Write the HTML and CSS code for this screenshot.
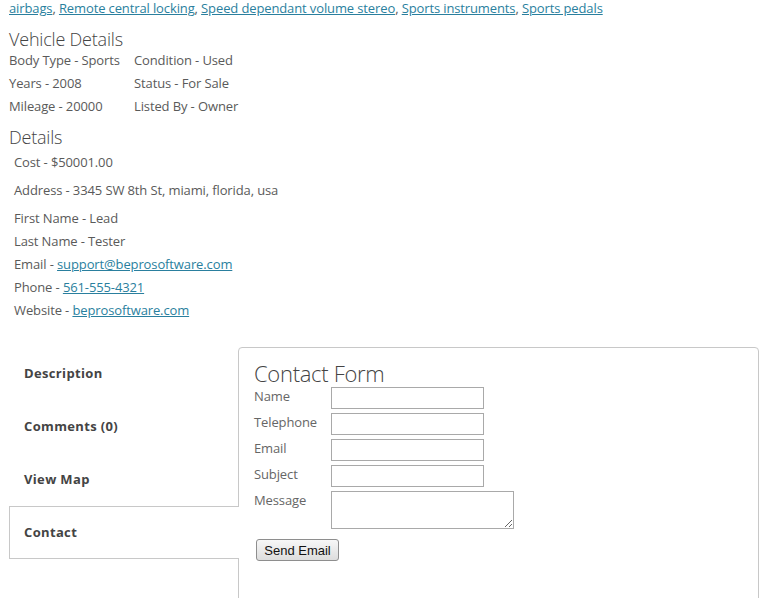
FILE: index.html
```html
<!DOCTYPE html>
<html>
<head>
<meta charset="utf-8">
<link rel="stylesheet" href="styles.css">
</head>
<body>
<div class="page">
  <div class="features"><a href="#">airbags</a>, <a href="#">Remote central locking</a>, <a href="#">Speed dependant volume stereo</a>, <a href="#">Sports instruments</a>, <a href="#">Sports pedals</a></div>

  <h2 class="section-title vehicle-title">Vehicle Details</h2>
  <div class="vehicle-grid">
    <div>Body Type - Sports</div><div>Condition - Used</div>
    <div>Years - 2008</div><div>Status - For Sale</div>
    <div>Mileage - 20000</div><div>Listed By - Owner</div>
  </div>

  <h2 class="section-title details-title">Details</h2>
  <div class="details">
    <div class="detail-block">Cost - $50001.00</div>
    <div class="detail-block">Address - 3345 SW 8th St, miami, florida, usa</div>
    <div class="detail-line">First Name - Lead</div>
    <div class="detail-line">Last Name - Tester</div>
    <div class="detail-line">Email - <a href="#">support@beprosoftware.com</a></div>
    <div class="detail-line">Phone - <a href="#">561-555-4321</a></div>
    <div class="detail-line">Website - <a href="#">beprosoftware.com</a></div>
  </div>

  <div class="tabs-area">
    <ul class="tabs">
      <li class="tab">Description</li>
      <li class="tab">Comments (0)</li>
      <li class="tab">View Map</li>
      <li class="tab active">Contact</li>
    </ul>
    <div class="panel">
      <h3 class="form-title">Contact Form</h3>
      <form class="contact-form">
        <label>Name</label><input type="text" class="field">
        <label>Telephone</label><input type="text" class="field">
        <label>Email</label><input type="text" class="field">
        <label>Subject</label><input type="text" class="field">
        <label>Message</label><textarea class="message"></textarea>
      </form>
      <button type="button" class="send">Send Email</button>
    </div>
  </div>
</div>
</body>
</html>
```
FILE: styles.css
```css
html, body {
  margin: 0;
  padding: 0;
  background: #fff;
}
body {
  font-family: "Open Sans", "DejaVu Sans", sans-serif;
  font-size: 13px;
  color: #5a5a5a;
  letter-spacing: -0.12px;
}
a {
  color: #2a7f9e;
  text-decoration: underline;
}
.page {
  padding-left: 9px;
  width: 750px;
}
.features {
  line-height: 16px;
  white-space: nowrap;
}
.section-title {
  margin: 0;
  font-size: 18px;
  font-weight: 300;
  line-height: 20px;
  color: #444;
  letter-spacing: -0.2px;
}
.vehicle-title {
  margin-top: 13px;
}
.vehicle-grid {
  display: grid;
  grid-template-columns: 125px auto;
  line-height: 23px;
}
.details-title {
  margin-top: 9px;
}
.details {
  padding-left: 5px;
  padding-top: 4px;
}
.detail-block {
  line-height: 23px;
  margin-bottom: 5px;
}
.detail-line {
  line-height: 23px;
}
.tabs-area {
  display: flex;
  margin-top: 25px;
  align-items: flex-start;
}
.tabs {
  list-style: none;
  margin: 0 -1px 0 0;
  padding: 0;
  width: 230px;
  position: relative;
  z-index: 1;
}
.tab {
  height: 53px;
  line-height: 53px;
  padding-left: 15px;
  font-weight: 700;
  color: #444;
  box-sizing: border-box;
  letter-spacing: 0.35px;
}
.tab.active {
  background: #fff;
  border: 1px solid #c8c8c8;
  border-right: none;
  padding-left: 14px;
  line-height: 51px;
}
.panel {
  width: 521px;
  height: 270px;
  box-sizing: border-box;
  border: 1px solid #c8c8c8;
  border-radius: 4px;
  padding: 12px 0 0 15px;
}
.form-title {
  margin: 0;
  font-size: 22px;
  font-weight: 300;
  line-height: 26px;
  color: #444;
  letter-spacing: -0.3px;
}
.contact-form {
  display: grid;
  grid-template-columns: 77px auto;
  row-gap: 4px;
  margin-top: 1px;
  align-items: start;
  justify-items: start;
}
.contact-form label {
  line-height: 18px;
  color: #666;
}
.field {
  width: 153px;
  height: 22px;
  box-sizing: border-box;
  border: 1px solid #a9a9a9;
  margin: 0;
  padding: 1px 2px;
  font: inherit;
}
.message {
  width: 183px;
  height: 38px;
  box-sizing: border-box;
  border: 1px solid #a9a9a9;
  margin: 0;
  padding: 2px;
  font: inherit;
}
.send {
  display: block;
  margin: 10px 0 0 2px;
  width: 83px;
  height: 22px;
  padding: 0;
  font-family: "Liberation Sans", Arial, sans-serif;
  font-size: 13px;
  letter-spacing: 0;
  color: #111;
  border: 1px solid #8e8e8e;
  border-radius: 3px;
  background: linear-gradient(#f7f7f7, #dddddd);
}
```
